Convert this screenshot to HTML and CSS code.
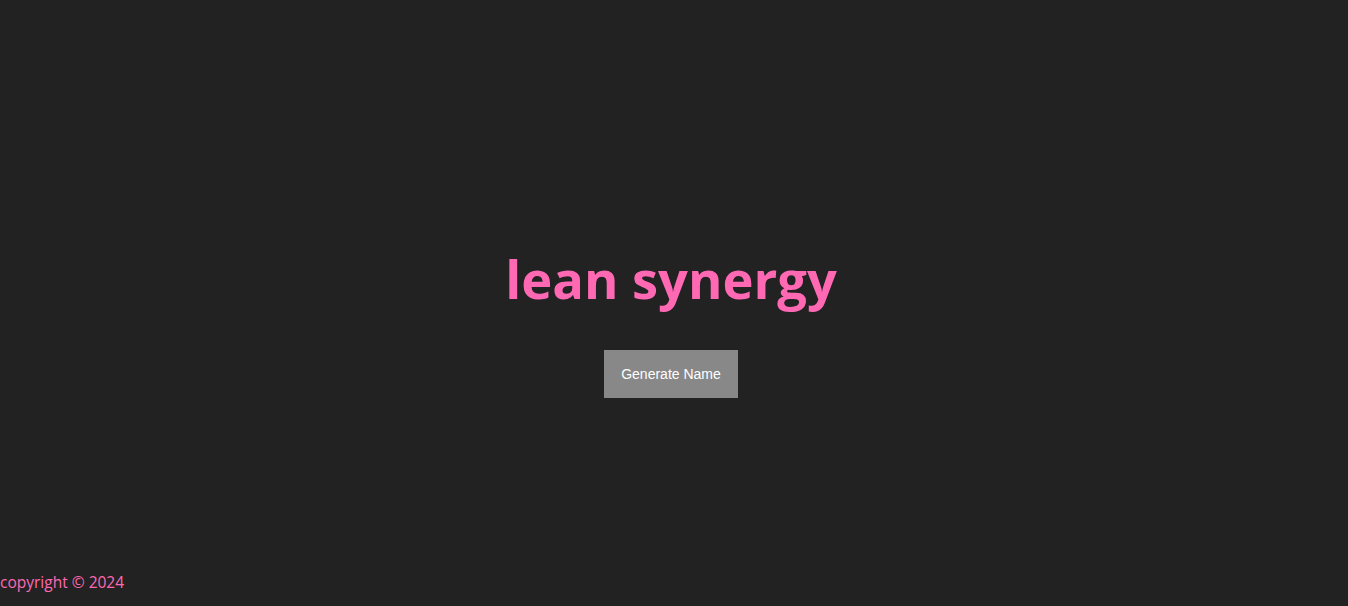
FILE: index.html
```html
<!DOCTYPE html>
<html lang="en">
<head>
<meta charset="utf-8">
<title>Name Generator</title>
<link rel="stylesheet" href="styles.css">
</head>
<body>
<main class="main">
  <h1 class="title">lean synergy</h1>
  <button class="gen-btn" type="button">Generate Name</button>
</main>
<footer class="footer">copyright © 2024</footer>
</body>
</html>
```
FILE: styles.css
```css
html, body {
  margin: 0;
  padding: 0;
  height: 100%;
}
body {
  background: #222222;
  display: flex;
  flex-direction: column;
  font-family: "Open Sans", "Noto Sans", sans-serif;
}
.main {
  flex: 1;
  display: flex;
  flex-direction: column;
  align-items: center;
  justify-content: center;
  padding: 73px 6px 0 0;
}
.title {
  color: #ff69b4;
  font-size: 52.5px;
  font-weight: 700;
  margin: 0 0 39px;
  line-height: 64px;
}
.gen-btn {
  background: #888888;
  color: #ffffff;
  border: none;
  font-family: "Liberation Sans", Arial, sans-serif;
  font-size: 14px;
  padding: 15px 16px;
  width: 134px;
  height: 48px;
}
.footer {
  color: #ff69b4;
  font-size: 15.5px;
  padding: 0 0 14px;
  line-height: 20px;
}
```
